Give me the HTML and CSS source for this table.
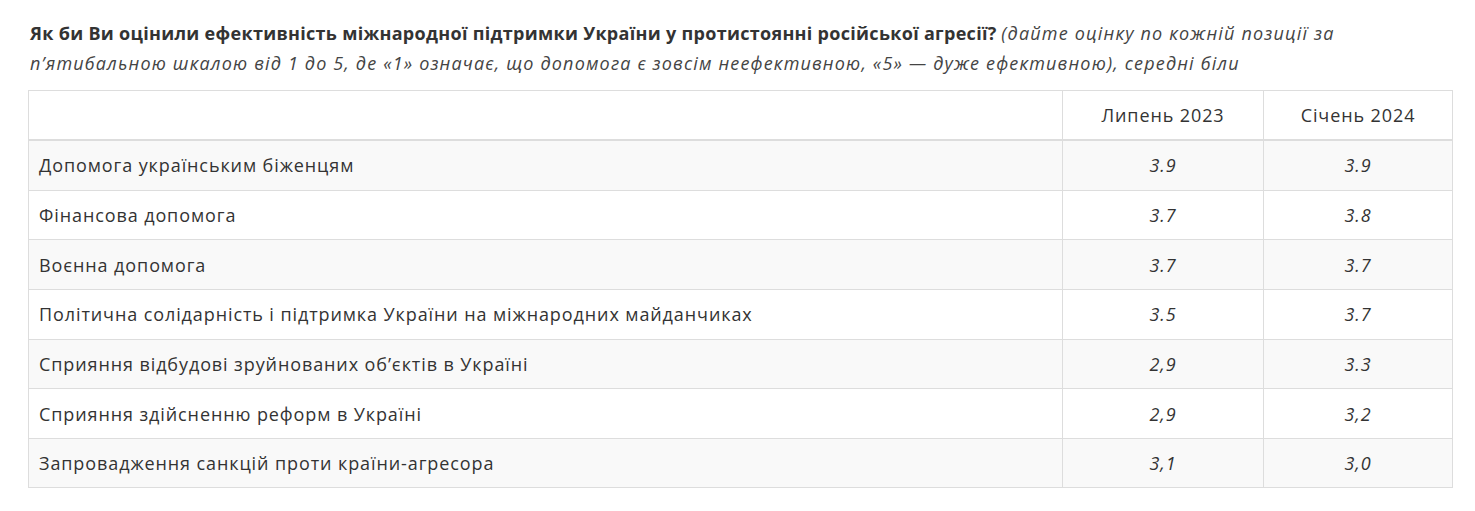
FILE: index.html
```html
<!DOCTYPE html>
<html lang="uk">
<head>
<meta charset="utf-8">
<title>Оцінка міжнародної підтримки</title>
<link rel="stylesheet" href="styles.css">
</head>
<body>
<div class="page">
  <p class="question"><strong>Як би Ви оцінили ефективність міжнародної підтримки України у протистоянні російської агресії?</strong> <em>(дайте оцінку по кожній позиції за п’ятибальною шкалою від 1 до 5, де «1» означає, що допомога є зовсім неефективною, «5» — дуже ефективною), середні біли</em></p>
  <table class="data">
    <colgroup><col class="c-label"><col class="c-jul"><col class="c-jan"></colgroup>
    <thead>
      <tr><th class="label"></th><th class="val">Липень 2023</th><th class="val">Січень 2024</th></tr>
    </thead>
    <tbody>
      <tr><td class="label">Допомога українським біженцям</td><td class="val">3.9</td><td class="val">3.9</td></tr>
      <tr><td class="label">Фінансова допомога</td><td class="val">3.7</td><td class="val">3.8</td></tr>
      <tr><td class="label">Воєнна допомога</td><td class="val">3.7</td><td class="val">3.7</td></tr>
      <tr><td class="label">Політична солідарність і підтримка України на міжнародних майданчиках</td><td class="val">3.5</td><td class="val">3.7</td></tr>
      <tr><td class="label">Сприяння відбудові зруйнованих об’єктів в Україні</td><td class="val">2,9</td><td class="val">3.3</td></tr>
      <tr><td class="label">Сприяння здійсненню реформ в Україні</td><td class="val">2,9</td><td class="val">3,2</td></tr>
      <tr><td class="label">Запровадження санкцій проти країни-агресора</td><td class="val">3,1</td><td class="val">3,0</td></tr>
    </tbody>
  </table>
</div>
</body>
</html>
```
FILE: styles.css
```css
html, body { margin: 0; padding: 0; background: #fff; }
body { font-family: "Open Sans", "DejaVu Sans", sans-serif; color: #333; }
.page { padding: 18px 22px 0 28px; }
.question { margin: 0 0 12px 2px; font-size: 18px; line-height: 30px; color: #333; }
.question strong { font-weight: 700; letter-spacing: 0.3px; }
.question em { font-style: italic; color: #444; letter-spacing: 1.17px; }
.data { width: 1425px; table-layout: fixed; border-collapse: collapse; border: 1px solid #ddd; font-size: 18px; letter-spacing: 0.9px; }
.c-jul { width: 201px; }
.c-jan { width: 189px; }
.data th, .data td { border: 1px solid #ddd; padding: 0 10px; font-weight: 400; line-height: 24px; }
.data thead th { border-bottom: 2px solid #ddd; height: 48px; }
.data tbody td { height: 48.65px; }
.data .val { text-align: center; }
.data td.val { font-style: italic; }
.data tbody tr:nth-child(odd) { background: #f9f9f9; }
.data td.label { text-align: left; }
```
